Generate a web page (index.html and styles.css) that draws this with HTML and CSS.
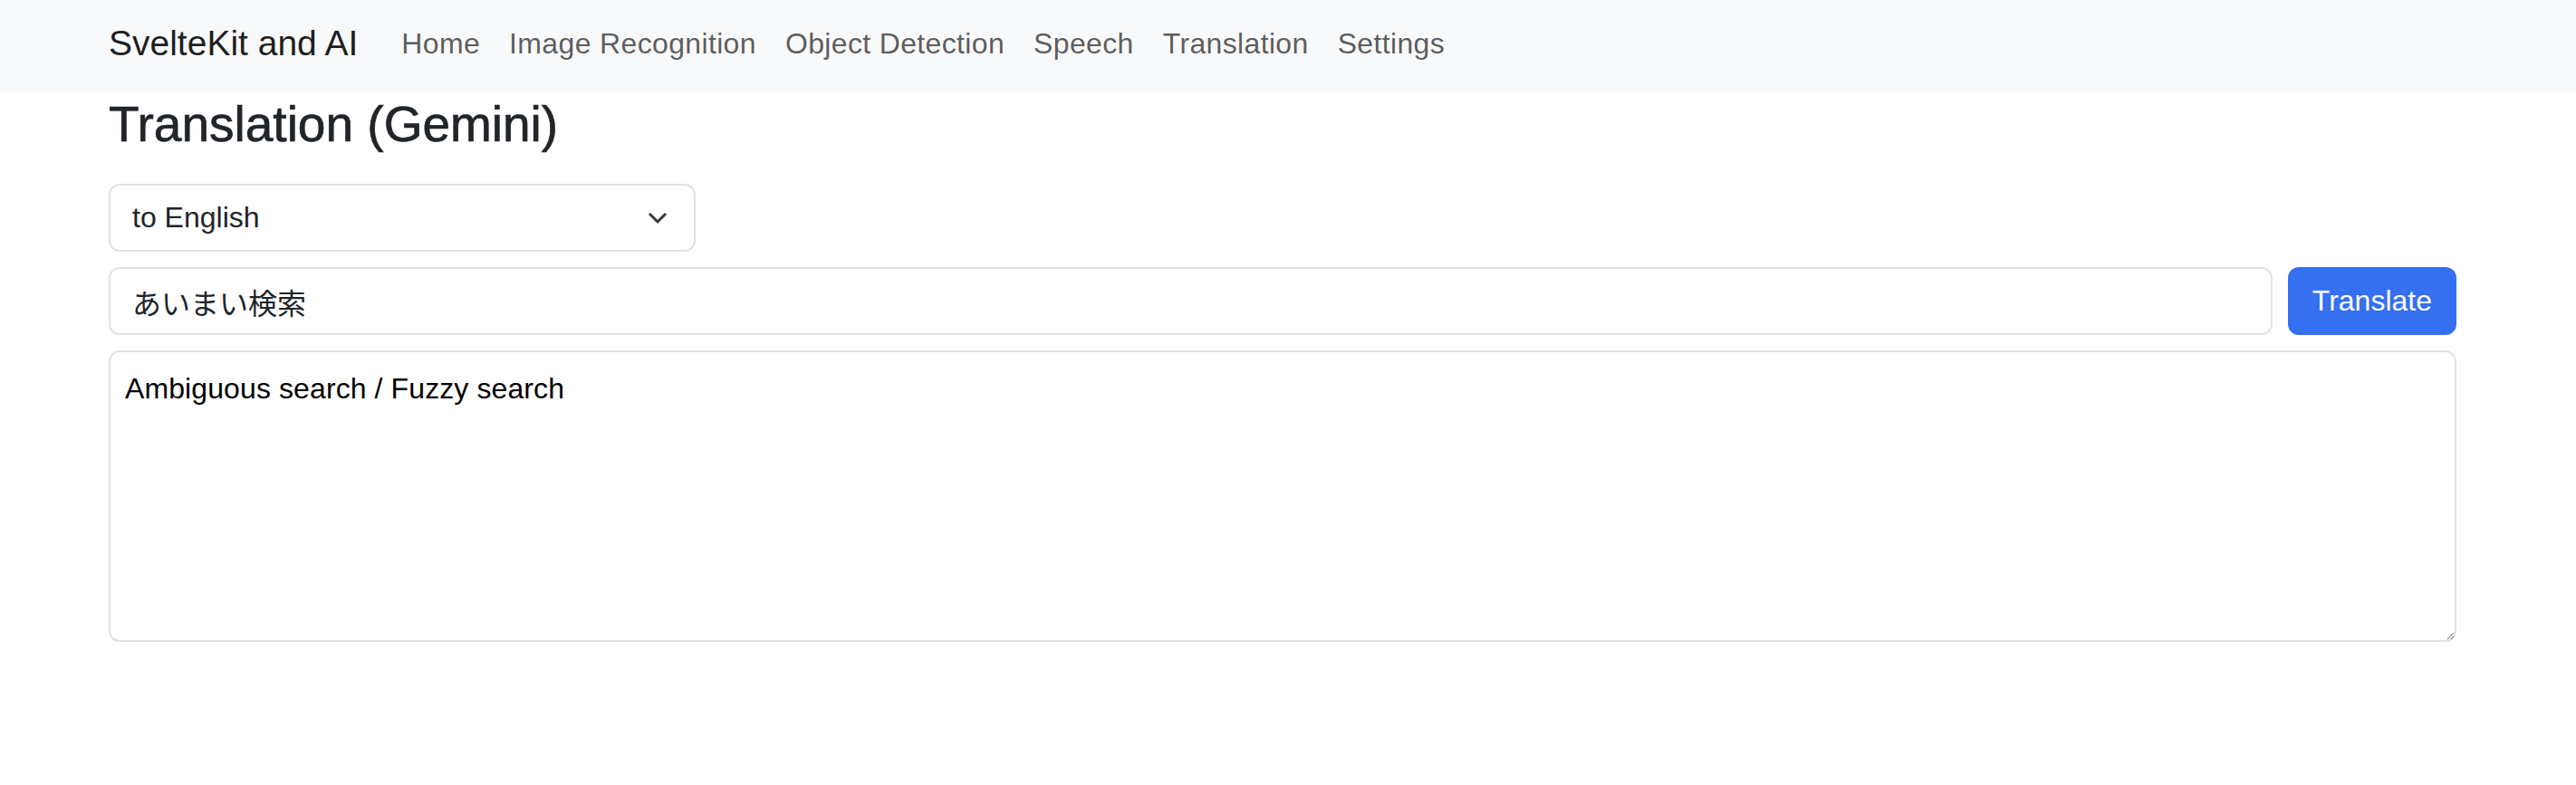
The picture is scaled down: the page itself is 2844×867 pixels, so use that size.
FILE: index.html
```html
<!DOCTYPE html>
<html lang="en">
<head>
<meta charset="utf-8">
<title>Translation (Gemini)</title>
<link rel="stylesheet" href="styles.css">
</head>
<body>
<nav class="navbar">
  <div class="nav-inner">
    <a class="brand" href="#">SvelteKit and AI</a>
    <ul class="nav-links">
      <li><a href="#">Home</a></li>
      <li><a href="#">Image Recognition</a></li>
      <li><a href="#">Object Detection</a></li>
      <li><a href="#">Speech</a></li>
      <li><a href="#">Translation</a></li>
      <li><a href="#">Settings</a></li>
    </ul>
  </div>
</nav>
<main class="container">
  <h3 class="page-title">Translation (Gemini)</h3>
  <div class="select">
    <span>to English</span>
    <svg class="chevron" width="20" height="12" viewBox="0 0 20 12" aria-hidden="true"><path d="M1.8 1.8 L10 10 L18.2 1.8" fill="none" stroke="#343a40" stroke-width="3" stroke-linecap="round" stroke-linejoin="round"/></svg>
  </div>
  <div class="input-row">
    <input class="text-input" type="text" value="あいまい検索">
    <button class="btn" type="button">Translate</button>
  </div>
  <textarea class="output" readonly>Ambiguous search / Fuzzy search</textarea>
</main>
</body>
</html>
```
FILE: styles.css
```css
body {
  margin: 0;
  background: #fff;
  color: #212529;
  font-family: "Liberation Sans", Arial, "Noto Sans CJK JP", sans-serif;
}

.navbar {
  background: #f8f9fa;
  height: 102px;
  box-sizing: border-box;
  padding-bottom: 6px;
  display: flex;
  align-items: center;
}

.nav-inner {
  width: 2592px;
  margin-left: 120px;
  display: flex;
  align-items: center;
}

.brand {
  font-size: 39px;
  line-height: 58px;
  color: rgba(0, 0, 0, 0.9);
  text-decoration: none;
  margin-right: 32px;
}

.nav-links {
  list-style: none;
  margin: 0;
  padding: 0;
  display: flex;
}

.nav-links a {
  display: block;
  padding: 0 16px;
  font-size: 32px;
  line-height: 48px;
  letter-spacing: 0.35px;
  color: rgba(0, 0, 0, 0.65);
  text-decoration: none;
}

.container {
  width: 2592px;
  margin-left: 120px;
}

.page-title {
  margin: 2px 0 33px;
  font-size: 55px;
  font-weight: normal;
  line-height: 1.2;
  color: #212529;
  -webkit-text-stroke: 0.7px #212529;
}

.select {
  width: 648px;
  height: 75px;
  box-sizing: border-box;
  border: 2px solid #dee2e6;
  border-radius: 12px;
  padding: 0 30px 0 24px;
  display: flex;
  align-items: center;
  justify-content: space-between;
  font-size: 32px;
  color: #212529;
  background: #fff;
}

.chevron {
  display: block;
}

.input-row {
  display: flex;
  gap: 17px;
  margin-top: 17px;
}

.text-input {
  flex: 1;
  min-width: 0;
  height: 75px;
  box-sizing: border-box;
  border: 2px solid #dee2e6;
  border-radius: 12px;
  padding: 0 24px;
  font-family: inherit;
  font-size: 32px;
  color: #212529;
  background: #fff;
  outline: none;
}

.btn {
  height: 75px;
  box-sizing: border-box;
  padding: 0 25px;
  border: 2px solid #3470ef;
  border-radius: 12px;
  background: #3470ef;
  color: #fff;
  font-family: inherit;
  font-size: 32px;
}

.output {
  display: block;
  width: 100%;
  height: 322px;
  margin: 17px 0 0;
  box-sizing: border-box;
  border: 2px solid #dee2e6;
  border-radius: 12px;
  padding: 16px;
  font-family: inherit;
  font-size: 32px;
  line-height: 48px;
  letter-spacing: 0.1px;
  color: #000;
  background: #fff;
  outline: none;
  overflow: hidden;
}
```
